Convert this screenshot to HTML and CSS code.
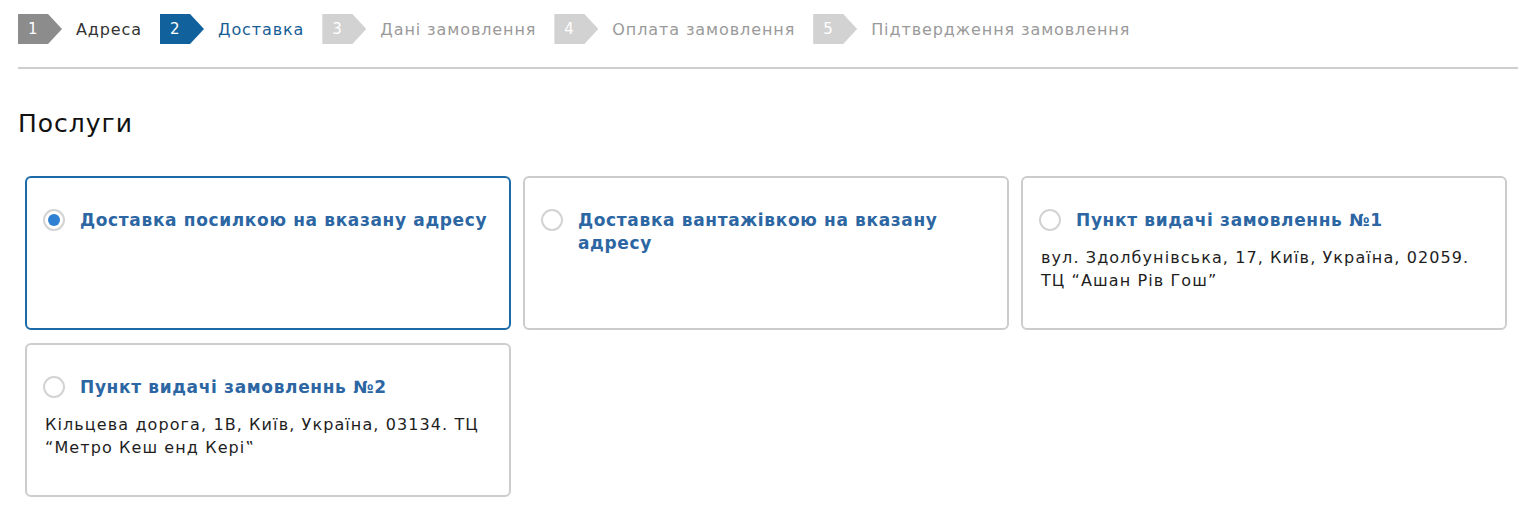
FILE: index.html
```html
<!DOCTYPE html>
<html lang="uk">
<head>
    <meta charset="UTF-8">
    <meta name="viewport" content="width=device-width, initial-scale=1.0">
    <title>Оформлення замовлення</title>
    <link rel="stylesheet" href="styles.css">
</head>
<body>
    <div class="checkout">
        <ul class="steps">
            <li class="step done"><span class="step-num">1</span><span class="step-label">Адреса</span></li>
            <li class="step active"><span class="step-num">2</span><span class="step-label">Доставка</span></li>
            <li class="step"><span class="step-num">3</span><span class="step-label">Дані замовлення</span></li>
            <li class="step"><span class="step-num">4</span><span class="step-label">Оплата замовлення</span></li>
            <li class="step"><span class="step-num">5</span><span class="step-label">Підтвердження замовлення</span></li>
        </ul>

        <h2 class="section-title">Послуги</h2>

        <div class="services">
            <label class="service selected">
                <span class="service-head">
                    <span class="radio checked"></span>
                    <span class="service-name">Доставка посилкою на вказану адресу</span>
                </span>
            </label>
            <label class="service">
                <span class="service-head">
                    <span class="radio"></span>
                    <span class="service-name">Доставка вантажівкою на вказану адресу</span>
                </span>
            </label>
            <label class="service">
                <span class="service-head">
                    <span class="radio"></span>
                    <span class="service-name">Пункт видачі замовленнь №1</span>
                </span>
                <span class="service-addr">вул. Здолбунівська, 17, Київ, Україна, 02059. ТЦ “Ашан Рів Гош”</span>
            </label>
            <label class="service">
                <span class="service-head">
                    <span class="radio"></span>
                    <span class="service-name">Пункт видачі замовленнь №2</span>
                </span>
                <span class="service-addr">Кільцева дорога, 1В, Київ, Україна, 03134. ТЦ “Метро Кеш енд Кері‟</span>
            </label>
        </div>
    </div>
</body>
</html>
```

FILE: styles.css
```css
body {
    margin: 0;
    font-family: "DejaVu Sans", Verdana, sans-serif;
    color: #222;
    background: #fff;
}
.checkout {
    margin: 0 1px 0 18px;
    padding-top: 14px;
}
.steps {
    display: flex;
    align-items: center;
    list-style: none;
    margin: 0;
    padding: 0 0 23px;
    border-bottom: 2px solid #cfcfcf;
}
.step {
    display: flex;
    align-items: center;
    margin-right: 18px;
    color: #9a9a9a;
    font-size: 16px;
    letter-spacing: 0.9px;
}
.step-num {
    width: 44px;
    height: 30px;
    box-sizing: border-box;
    padding-left: 10px;
    line-height: 30px;
    font-size: 15px;
    letter-spacing: 0;
    color: #fff;
    background-color: #d2d2d2;
    clip-path: polygon(0 0, 30px 0, 44px 50%, 30px 100%, 0 100%);
    margin-right: 14px;
}
.step.done .step-num {
    background-color: #8c8c8c;
}
.step.done .step-label {
    color: #333;
}
.step.active .step-num {
    background-color: #11629c;
}
.step.active .step-label {
    color: #175e95;
}
.section-title {
    margin: 40px 0 37px;
    font-size: 25px;
    font-weight: normal;
    letter-spacing: 1px;
    color: #111;
    line-height: 30px;
}
.services {
    display: grid;
    grid-template-columns: repeat(3, 486px);
    gap: 13px 12px;
    padding-left: 7px;
}
.service {
    display: flex;
    flex-direction: column;
    height: 154px;
    box-sizing: border-box;
    padding: 31px 14px 0 16px;
    border: 2px solid #cccccc;
    border-radius: 6px;
    cursor: pointer;
}
.service.selected {
    border-color: #1d6aa9;
}
.service-head {
    display: flex;
    align-items: flex-start;
}
.radio {
    flex: none;
    width: 22px;
    height: 22px;
    box-sizing: border-box;
    border: 2px solid #d3d3d3;
    border-radius: 50%;
    margin: 0 15px 0 0;
    position: relative;
    background: #fff;
}
.radio.checked::after {
    content: "";
    position: absolute;
    top: 3px;
    left: 3px;
    width: 12px;
    height: 12px;
    border-radius: 50%;
    background-color: #2f7fd3;
}
.service-name {
    font-weight: bold;
    font-size: 17px;
    line-height: 23px;
    letter-spacing: 0.65px;
    color: #2c66a3;
}
.service-addr {
    margin-top: 14px;
    padding-left: 2px;
    font-size: 16px;
    line-height: 23px;
    letter-spacing: 1.1px;
    color: #1e1e1e;
}
```
